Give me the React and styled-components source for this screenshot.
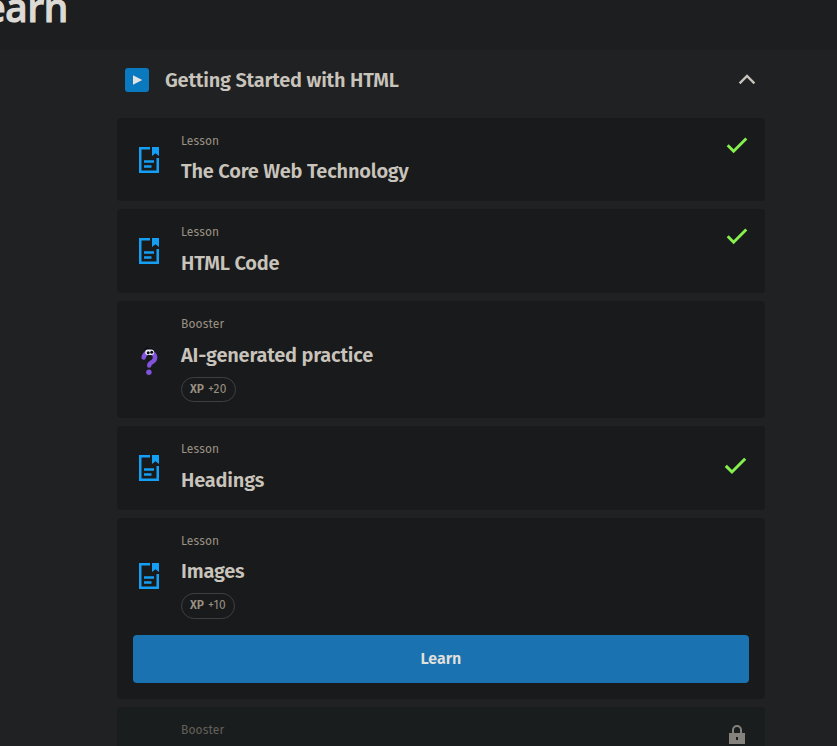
import React from "react";
import styled, { createGlobalStyle } from "styled-components";

const Global = createGlobalStyle`
  * { box-sizing: border-box; }
  html, body { margin: 0; background: #1f2122; }
  body { height: 746px; overflow: hidden; font-family: "Fira Sans", "Noto Sans", "Open Sans", sans-serif; }
`;

const Page = styled.div`
  height: 746px;
  overflow: hidden;
  background: #1f2122;
`;

const TopBar = styled.header`
  height: 50px;
  background: #1c1e1f;
  overflow: hidden;
`;

const Brand = styled.div`
  width: 68px;
  margin-top: -25px;
  display: flex;
  justify-content: flex-end;
  font-family: "Noto Sans", sans-serif;
  font-size: 39px;
  line-height: 64px;
  font-weight: 500;
  color: #dddad5;
  letter-spacing: -0.2px;
  -webkit-text-stroke: 1.2px #dddad5;
  stroke-linejoin: round;
`;

const Module = styled.section`
  width: 648px;
  margin-left: 117px;
`;

const ModuleHeader = styled.div`
  height: 68px;
  padding: 0 6px 8px 8px;
  display: flex;
  align-items: center;
`;

const PlayBadge = styled.span`
  width: 24px;
  height: 24px;
  margin-right: 16px;
  border-radius: 3px;
  background: #0b79bf;
  display: flex;
`;

const ModuleTitle = styled.h2`
  flex: 1;
  margin: 0;
  font-size: 20px;
  line-height: 28px;
  font-weight: 600;
  color: #c8c3bb;
  white-space: nowrap;
  letter-spacing: -0.2px;
`;

const Cards = styled.div`
  display: flex;
  flex-direction: column;
  gap: 8px;
`;

const Card = styled.article`
  flex: none;
  height: ${(p) => p.$height}px;
  padding: 0 16px;
  border-radius: 4px;
  background: ${(p) => (p.$locked ? "#1a1d1d" : "#191a1b")};
`;

const CardRow = styled.div`
  display: grid;
  grid-template-columns: 48px 1fr 24px;
`;

const IconCell = styled.div`
  padding-top: ${(p) => p.$top}px;
  height: 80px;
  svg { display: block; }
`;

const Status = styled.div`
  padding-top: ${(p) => p.$top}px;
  margin-left: ${(p) => p.$shift || 0}px;
  svg { display: block; }
`;

const Kind = styled.div`
  margin-top: 14px;
  height: 18px;
  font-size: 12px;
  line-height: 18px;
  color: ${(p) => (p.$locked ? "#63605b" : "#999184")};
  letter-spacing: 0.15px;
`;

const Title = styled.h3`
  margin: ${(p) => p.$gap}px 0 0;
  height: 28px;
  font-size: 20px;
  line-height: 28px;
  font-weight: 600;
  color: #c8c3bb;
  white-space: nowrap;
  letter-spacing: -0.2px;
`;

const Xp = styled.div`
  width: ${(p) => p.$width}px;
  height: ${(p) => p.$height}px;
  margin-top: ${(p) => p.$gap}px;
  border: 1px solid #3d4042;
  border-radius: 13px;
  display: flex;
  align-items: center;
  padding: 0 0 2px 8px;
  gap: 4px;
  font-size: 12px;
  line-height: 18px;
  color: #999184;
  letter-spacing: 0.3px;
`;

const XpLabel = styled.span`
  font-weight: 600;
  letter-spacing: 0;
`;

const LearnButton = styled.button`
  display: block;
  width: 616px;
  height: 48px;
  margin-top: 16px;
  padding: 0 0 1px;
  border: 0;
  border-radius: 4px;
  background: #1b72b1;
  color: #e2e0dc;
  font: 600 16px/24px "Fira Sans", "Noto Sans", sans-serif;
`;

const Play = () => (
  <svg width="24" height="24" viewBox="0 0 24 24"><path d="M8 7.2v9.6l9.2-4.8z" fill="#e5e3df" /></svg>
);

const Chevron = () => (
  <svg width="24" height="24" viewBox="0 0 24 24">
    <path d="m4.6 15.4 7.4-7.4 7.4 7.4" fill="none" stroke="#c8c3bb" strokeWidth="2.4" />
  </svg>
);

const Check = ({ large }) => (
  <svg width={large ? 25 : 24} height={large ? 25 : 24} viewBox="0 0 24 24">
    <path d="m2.7 12.3 5.9 5.9L21.3 5.5" fill="none" stroke="#86f04e" strokeWidth="2.9" />
  </svg>
);

const LessonIcon = () => (
  <svg width="32" height="32" viewBox="0 0 32 32" fill="none" stroke="#149ff4" strokeWidth="2.5">
    <path d="M17 4.25H7.25v23.5h17.5V14M11 17.5h10M11 22.5h7.5" />
    <path d="M19 3h7v9l-3.5-2.7L19 12z" fill="#149ff4" stroke="none" />
  </svg>
);

const QuestionIcon = () => (
  <svg width="32" height="32" viewBox="0 0 32 32">
    <g transform="translate(.6 -1)">
      <path d="M9.8 5.2 12.5 4l1-1.5 1 1.7 5 .4.8 1.7" fill="#090d1d" />
      <path d="M10 13.5c.8-4.3 5-6.3 8.5-4.6 3.7 1.8 4 6.3.8 8.6-2.5 1.8-3.6 2-3.7 4.1" fill="none" stroke="#8152dc" strokeWidth="4.5" strokeLinecap="round" />
      <circle cx="15.3" cy="28.2" r="2.7" fill="#8152dc" />
      <rect x="11.6" y="5.4" width="8.8" height="5.6" rx="2.5" fill="#e9e9ee" />
      <circle cx="14.6" cy="8.7" r="1.5" fill="#080a12" /><circle cx="18.1" cy="8.2" r="1.5" fill="#080a12" />
    </g>
  </svg>
);

const Lock = () => (
  <svg width="24" height="24" viewBox="0 0 24 24">
    <path d="M8 10V7a4 4 0 0 1 8 0v3" fill="none" stroke="#85827d" strokeWidth="2" />
    <path fillRule="evenodd" d="M4 10h16v11H4zm7 4v3h2v-3z" fill="#85827d" />
  </svg>
);

const lessons = [
  { kind: "Lesson", title: "The Core Web Technology", height: 83, gap: 7, icon: 26, check: 15 },
  { kind: "Lesson", title: "HTML Code", height: 84, gap: 8, icon: 26, check: 15 },
  { kind: "Booster", title: "AI-generated practice", height: 117, gap: 8, icon: 44, xp: "+20", xpWidth: 55, xpHeight: 25, xpGap: 8 },
  { kind: "Lesson", title: "Headings", height: 84, gap: 8, icon: 26, check: 27, large: true },
  { kind: "Lesson", title: "Images", height: 181, gap: 7, icon: 42, xp: "+10", xpWidth: 54, xpHeight: 26, xpGap: 8, learn: true },
];

export default function App() {
  return (
    <Page>
      <Global />
      <TopBar><Brand>Learn</Brand></TopBar>
      <Module>
        <ModuleHeader>
          <PlayBadge><Play /></PlayBadge>
          <ModuleTitle>Getting Started with HTML</ModuleTitle>
          <Chevron />
        </ModuleHeader>
        <Cards>
          {lessons.map((l) => (
            <Card key={l.title} $height={l.height}>
              <CardRow>
                <IconCell $top={l.icon}>{l.kind === "Lesson" ? <LessonIcon /> : <QuestionIcon />}</IconCell>
                <div>
                  <Kind>{l.kind}</Kind>
                  <Title $gap={l.gap}>{l.title}</Title>
                  {l.xp && <Xp $width={l.xpWidth} $height={l.xpHeight} $gap={l.xpGap}><XpLabel>XP</XpLabel>{l.xp}</Xp>}
                </div>
                <Status $top={l.check} $shift={l.large ? -2 : 0}>{l.check && <Check large={l.large} />}</Status>
              </CardRow>
              {l.learn && <LearnButton>Learn</LearnButton>}
            </Card>
          ))}
          <Card $height={117} $locked>
            <CardRow>
              <IconCell $top={44} />
              <Kind $locked>Booster</Kind>
              <Status $top={16}><Lock /></Status>
            </CardRow>
          </Card>
        </Cards>
      </Module>
    </Page>
  );
}
